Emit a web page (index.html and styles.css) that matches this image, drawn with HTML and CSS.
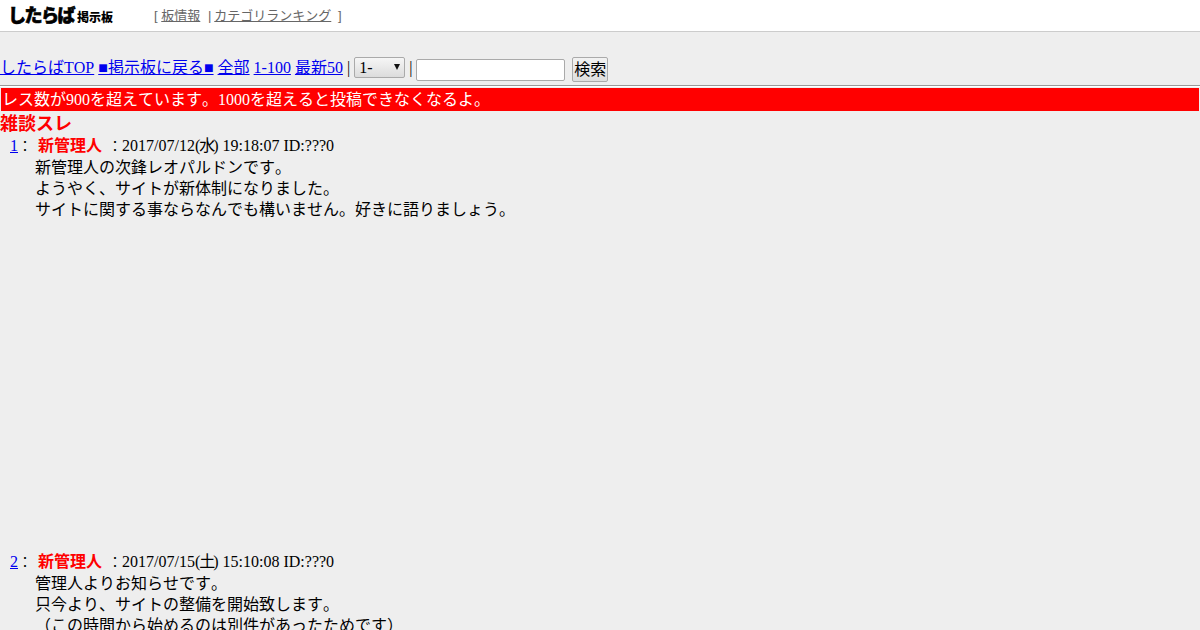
FILE: index.html
```html
<!DOCTYPE html>
<html lang="ja">
<head>
<meta charset="utf-8">
<title>雑談スレ</title>
<link rel="stylesheet" href="styles.css">
</head>
<body>
<header class="site-header">
  <a class="logo" href="#"><span class="logo-main">したらば</span><span class="logo-sub">掲示板</span></a>
  <nav class="header-nav">[ <a href="#">板情報</a> <span class="sep">|</span><a href="#">カテゴリランキング</a> <span class="end">]</span></nav>
</header>
<div class="thread-nav">
  <a href="#">したらばTOP</a> <a href="#">■掲示板に戻る■</a> <a href="#">全部</a> <a href="#">1-100</a> <a href="#">最新50</a> |
  <span class="range-wrap"><select class="range"><option>1-</option></select></span> |
  <input class="query" type="text">
  <button class="search" type="button">検索</button>
</div>
<hr class="rule">
<div class="warning">レス数が900を超えています。1000を超えると投稿できなくなるよ。</div>
<h1 class="thread-title">雑談スレ</h1>
<dl class="posts">
  <dt class="post-head"><a href="#">1</a><span class="colon first-colon">：</span> <b class="name">新管理人</b> <span class="colon">：</span>2017/07/12(<span class="dow">水</span>) 19:18:07 ID:???0</dt>
  <dd class="post-body first">新管理人の次鋒レオパルドンです。<br>ようやく、サイトが新体制になりました。<br>サイトに関する事ならなんでも構いません。好きに語りましょう。</dd>
  <dt class="post-head"><a href="#">2</a><span class="colon first-colon">：</span> <b class="name">新管理人</b> <span class="colon">：</span>2017/07/15(<span class="dow">土</span>) 15:10:08 ID:???0</dt>
  <dd class="post-body">管理人よりお知らせです。<br>只今より、サイトの整備を開始致します。<br>（この時間から始めるのは別件があったためです）</dd>
</dl>
</body>
</html>
```
FILE: styles.css
```css
html, body {
  margin: 0;
  padding: 0;
  height: 630px;
  overflow: hidden;
}
body {
  background: #eeeeee;
  color: #000;
  font-family: "Liberation Serif", "Noto Sans CJK JP", serif;
  font-size: 16px;
  font-kerning: none;
  font-feature-settings: "palt" 0, "kern" 0;
}
a { color: #0000ee; }
.site-header {
  display: flex;
  align-items: center;
  height: 31px;
  background: #fff;
  border-bottom: 1px solid #ccc;
}
.logo {
  display: flex;
  align-items: baseline;
  width: 154px;
  padding: 0 0 1px 8px;
  box-sizing: border-box;
  color: #000;
  text-decoration: none;
  font-family: "Noto Sans CJK JP", sans-serif;
  font-weight: 900;
  white-space: nowrap;
}
.logo-main {
  font-size: 18px;
  letter-spacing: -1.5px;
  line-height: 20px;
  -webkit-text-stroke: 0.6px #000;
}
.logo-sub {
  font-size: 12px;
  margin-left: 3px;
  line-height: 20px;
}
.header-nav {
  font-family: "Liberation Sans", "Noto Sans CJK JP", sans-serif;
  font-size: 13px;
  color: #666;
  padding-bottom: 2px;
}
.header-nav a { color: #666; }
.sep { margin: 0 3px 0 4px; }
.end { margin-left: 3px; }
.thread-nav {
  padding-top: 22px;
  height: 31px;
  white-space: nowrap;
}
.range-wrap {
  position: relative;
  display: inline-block;
}
.range-wrap::after {
  content: "";
  position: absolute;
  right: 5px;
  top: 7px;
  border-left: 3.5px solid transparent;
  border-right: 3.5px solid transparent;
  border-top: 6px solid #111;
  pointer-events: none;
}
.range {
  appearance: none;
  -webkit-appearance: none;
  width: 51px;
  height: 21px;
  padding: 0 0 0 4px;
  font-size: 16px;
  font-family: inherit;
  color: #000;
  border: 1px solid #aaa;
  border-radius: 2px;
  background: linear-gradient(#f6f6f6, #dcdcdc);
}
.query {
  width: 149px;
  height: 22px;
  box-sizing: border-box;
  border: 1px solid #aaa;
  border-radius: 2px;
  background: #fff;
  padding: 0 2px;
  vertical-align: -1px;
}
.search {
  font: inherit;
  line-height: 19px;
  margin-left: 3px;
  width: 36px;
  height: 25px;
  padding: 0;
  border: 1px solid #aaa;
  border-radius: 2px;
  background: linear-gradient(#f2f2f2, #dedede);
  color: #000;
  vertical-align: -2px;
}
.rule {
  margin: 0 0 1px;
  border: 0;
  border-top: 1px solid #999;
  border-bottom: 1px solid #fff;
}
.warning {
  margin: 0 1px;
  background: #ff0000;
  color: #fff;
  line-height: 23px;
  padding-left: 1px;
}
.thread-title {
  margin: 0;
  padding-top: 2px;
  color: #ff0000;
  font-size: 18px;
  line-height: 22px;
  font-weight: bold;
}
.posts { margin: 0; }
.post-head {
  padding-left: 10px;
  line-height: 21px;
}
.colon { font-size: 14px; }
.first-colon { margin-right: 2px; }
.dow { letter-spacing: -2px; margin-left: -1px; }
.name { color: #ff0000; margin-right: 2px; }
.post-body {
  margin: 0 0 0 35px;
  line-height: 21px;
}
.post-body.first { padding-bottom: 331px; }
```
